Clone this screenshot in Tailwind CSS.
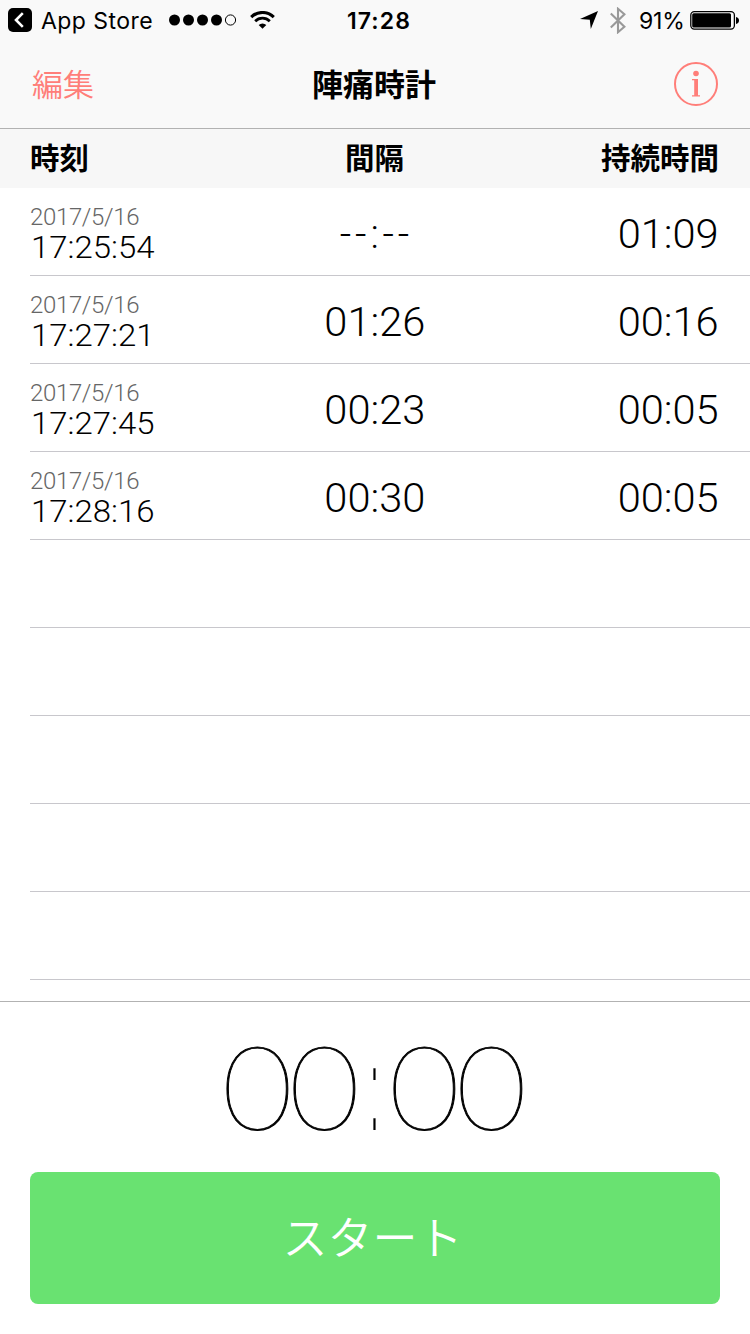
<!DOCTYPE html>
<html lang="ja">
<head>
    <meta charset="UTF-8">
    <meta name="viewport" content="width=device-width, initial-scale=1.0">
    <title>陣痛時計</title>
    <script src="https://cdn.jsdelivr.net/npm/@tailwindcss/browser@4"></script>
</head>
<body class="bg-white text-black w-[750px] h-[1334px] flex flex-col overflow-hidden font-['Inter','Noto_Sans_CJK_JP',sans-serif]">
    <!-- Status Bar -->
    <div class="bg-[#f9f9f9] h-10 shrink-0 flex justify-between items-center text-[23px] leading-10 whitespace-nowrap">
        <div class="w-[290px] flex items-center pl-2">
            <svg class="shrink-0 w-6 h-6" viewBox="0 0 24 24" fill="none">
                <rect width="24" height="24" rx="5" fill="#000"/>
                <path d="M14.8 5.2 8 12l6.8 6.8" stroke="#fff" stroke-width="2.6"/>
            </svg>
            <span class="ml-[9px] pt-px w-[112px] tracking-[0.45px]">App Store</span>
            <svg class="shrink-0 ml-[15px] w-[69px] h-3" viewBox="0 0 69 12">
                <circle cx="6.5" cy="6" r="5.5"/>
                <circle cx="20.5" cy="6" r="5.5"/>
                <circle cx="34.5" cy="6" r="5.5"/>
                <circle cx="48.5" cy="6" r="5.5"/>
                <circle cx="62.5" cy="6" r="5.1" fill="none" stroke="#000"/>
            </svg>
            <svg class="shrink-0 ml-[13px] w-[25px] h-[18px]" viewBox="0 0 25 18" fill="none" stroke="#000">
                <path d="M1.2 6.1a16 16 0 0 1 22.6 0" stroke-width="3"/>
                <path d="M5.2 10.2a10.4 10.4 0 0 1 14.6 0" stroke-width="2.8"/>
                <path d="M12.5 17.8 8.7 14a5.5 5.5 0 0 1 7.6 0z" fill="#000" stroke="none"/>
            </svg>
        </div>
        <div class="w-[170px] pl-2 pt-px text-center font-semibold tracking-[1.1px]">17:28</div>
        <div class="w-[290px] flex items-center justify-end pr-[11px]">
            <svg class="shrink-0 w-[18px] h-[18px]" viewBox="0 0 18 18"><path d="M18 0 10.8 18 9.8 8.8 0 7.9z"/></svg>
            <svg class="shrink-0 ml-[12px] w-4 h-[27px]" viewBox="0 0 16 27" fill="none" stroke="#999" stroke-width="2.1">
                <path d="m.8 6.6 13.6 13.2L8 25.2V1.8l6.4 5.4L.8 20.4"/>
            </svg>
            <span class="ml-[13px] pt-px w-[46px] tracking-[-0.2px]">91%</span>
            <svg class="shrink-0 ml-[5px] w-[49px] h-[19px]" viewBox="0 0 49 19">
                <rect x=".8" y=".7" width="43.6" height="17.4" rx="3.5" fill="none" stroke="#000" stroke-width="1.3"/>
                <rect x="2.2" y="2.2" width="38.8" height="14.4" rx="1.5"/>
                <path d="M46 6c4 .8 4 6.200 0 7z"/>
            </svg>
        </div>
    </div>

    <!-- Navigation Bar -->
    <div class="bg-[#f9f9f9] h-[89px] shrink-0 border-b border-[#b2b2b2] flex items-center justify-between px-8">
        <button class="w-24 pt-0.5 text-left text-[31px] leading-[86px] text-[#ff7e79] font-[350]">編集</button>
        <h1 class="pt-0.5 pr-0.5 text-[31px] leading-[86px] font-bold">陣痛時計</h1>
        <div class="w-24 flex justify-end">
            <svg class="w-11 h-11" viewBox="0 0 44 44" fill="#ff7e79">
                <circle cx="22" cy="22" r="21" fill="none" stroke="#ff7e79" stroke-width="2"/>
                <circle cx="22" cy="11.500" r="2.800"/>
                <path d="M18 17h6v16.200h2v1.200h-8v-1.200h2.200v-15H18z"/>
            </svg>
        </div>
    </div>

    <!-- Column Titles -->
    <div class="bg-[#f7f7f7] h-[59px] shrink-0 grid grid-cols-3 pl-[30px] pr-[31px] text-[29.5px] leading-[59px] font-bold">
        <div>時刻</div>
        <div class="text-center">間隔</div>
        <div class="text-right">持続時間</div>
    </div>

    <!-- Record List -->
    <div id="records" class="h-[813px] shrink-0 overflow-hidden pl-[30px] font-['Roboto']"></div>

    <!-- Timer -->
    <div class="border-t border-[#b2b2b2] grow px-[30px] flex flex-col">
        <div class="h-[170px] pr-px flex justify-center text-[116px] leading-[167px] font-['Lato'] font-thin [-webkit-text-stroke:0.9px_black]">
            <span class="w-[67px] flex justify-center scale-x-106">0</span>
            <span class="w-[67px] flex justify-center scale-x-106">0</span>
            <span class="w-[33px] flex justify-center scale-x-20 font-['Liberation_Sans'] leading-[176px] [-webkit-text-stroke:0]">:</span>
            <span class="w-[67px] flex justify-center scale-x-106">0</span>
            <span class="w-[67px] flex justify-center scale-x-106">0</span>
        </div>
        <button class="h-[132px] pr-[5px] rounded-lg bg-[#69e271] text-white text-[45px] leading-[134px] font-[350]">スタート</button>
    </div>

    <script>
        const records = [
            { date: '2017/5/16', time: '17:25:54', interval: '--:--', duration: '01:09' },
            { date: '2017/5/16', time: '17:27:21', interval: '01:26', duration: '00:16' },
            { date: '2017/5/16', time: '17:27:45', interval: '00:23', duration: '00:05' },
            { date: '2017/5/16', time: '17:28:16', interval: '00:30', duration: '00:05' },
        ];
        const list = document.getElementById('records');

        // Fill the visible area, rows without a record stay empty
        for (let i = 0; i < 9; i++) {
            const r = records[i];
            const row = document.createElement('div');
            row.className = 'h-[88px] border-b border-[#c8c7cc] pr-[31px] grid grid-cols-3 font-light whitespace-nowrap';
            if (r) {
                const spacing = r.interval === '--:--' ? 'tracking-[3.8px] pl-1' : 'scale-x-104';
                row.innerHTML = `
                    <div class="pt-[14px]">
                        <div class="text-[24px] leading-[30px] text-[#666] tracking-[-0.35px]">${r.date}</div>
                        <div class="text-[32px] leading-[31px] origin-left scale-x-103 pl-px">${r.time}</div>
                    </div>
                    <div class="text-center text-[40px] leading-[93px] ${spacing}">${r.interval}</div>
                    <div class="text-right text-[40px] leading-[93px] origin-right scale-x-104">${r.duration}</div>`;
            }
            list.appendChild(row);
        }
    </script>
</body>
</html>
